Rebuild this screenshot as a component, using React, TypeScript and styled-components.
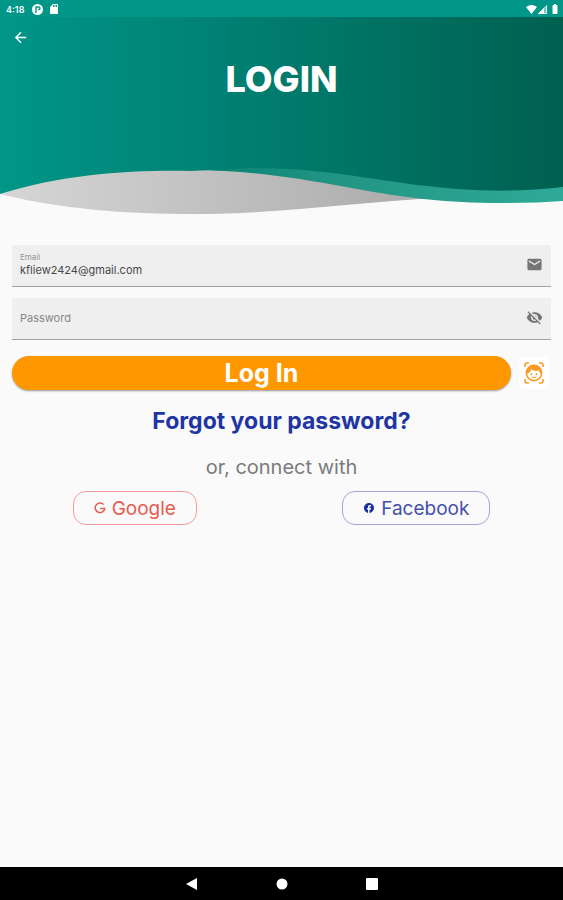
import React, { useState } from 'react';
import styled, { createGlobalStyle } from 'styled-components';
import { MdArrowBack, MdEmail, MdVisibilityOff, MdVisibility, MdFacebook, MdSdCard, MdBatteryFull } from 'react-icons/md';

const GlobalStyle = createGlobalStyle`
  * { box-sizing: border-box; }
  body { margin: 0; background: #fafafa; font-family: Inter, "Noto Sans", sans-serif; }
  button, input { font-family: inherit; }
`;

const Page = styled.div`
  display: flex;
  flex-direction: column;
  min-height: 100vh;
`;

const StatusBar = styled.div`
  display: flex;
  align-items: center;
  justify-content: space-between;
  height: 17px;
  padding: 1px 2px 0 6px;
  background: #009688;
  color: #fff;
`;

const StatusGroup = styled.div<{ $gap: number }>`
  display: flex;
  align-items: center;
  gap: ${p => p.$gap}px;
`;

const Clock = styled.span`
  font-size: 9px;
  font-weight: 600;
  margin-right: 3px;
`;

const Header = styled.header`
  display: grid;
  height: 199px;
  & > * { grid-area: 1 / 1; }
`;

const Waves = styled.svg`
  display: block;
  width: 100%;
  height: 199px;
`;

const HeaderContent = styled.div`
  display: grid;
  grid-template-rows: 40px auto;
  align-content: start;
  justify-items: start;
`;

const BackButton = styled.button`
  display: grid;
  place-items: center;
  width: 40px;
  height: 40px;
  padding: 0;
  border: 0;
  background: none;
  color: #fff;
  cursor: pointer;
`;

const Title = styled.h1`
  justify-self: center;
  margin: 0;
  color: #fff;
  font-size: 36px;
  line-height: 44px;
  font-weight: 800;
`;

const Form = styled.form`
  display: flex;
  flex-direction: column;
  gap: 11px;
  padding: 29px 12px 0;
`;

const Field = styled.div`
  display: flex;
  align-items: center;
  height: 42px;
  padding: 0 8px 2px;
  background: #efefef;
  border-bottom: 1px solid #a2a2a2;
  color: #757575;
`;

const FieldText = styled.div`
  flex: 1;
  display: flex;
  flex-direction: column;
  min-width: 0;
`;

const FieldLabel = styled.label`
  font-size: 8px;
  line-height: 10px;
  color: #949494;
`;

const FieldInput = styled.input`
  width: 100%;
  padding: 0;
  border: 0;
  outline: 0;
  background: none;
  font-size: 11px;
  line-height: 16px;
  color: #484848;
  &::placeholder { color: #868686; opacity: 1; }
`;

const IconButton = styled.button`
  display: grid;
  place-items: center;
  padding: 0;
  border: 0;
  background: none;
  color: inherit;
  cursor: pointer;
`;

const Actions = styled.div`
  display: flex;
  align-items: center;
  gap: 8px;
  padding: 5px 2px 0 0;
`;

const LoginButton = styled.button`
  flex: 1;
  height: 34px;
  padding: 0;
  border: 0;
  border-radius: 17px;
  background: #ff9800;
  box-shadow: 0 1px 2px rgba(0, 0, 0, 0.4);
  color: #fff;
  font-size: 25px;
  line-height: 34px;
  font-weight: 700;
  cursor: pointer;
`;

const FaceButton = styled.button`
  display: grid;
  place-items: center;
  width: 30px;
  height: 32px;
  padding: 0;
  border: 0;
  border-radius: 5px;
  background: #fff;
  color: #f99a25;
  cursor: pointer;
`;

const Links = styled.section`
  display: flex;
  flex-direction: column;
  align-items: center;
  padding-top: 16px;
`;

const ForgotLink = styled.a`
  color: #1f35a5;
  font-size: 23px;
  line-height: 30px;
  font-weight: 700;
  text-decoration: none;
`;

const Divider = styled.p`
  margin: 17px 0 10px;
  color: #7b7b7b;
  font-size: 20px;
  line-height: 28px;
`;

const Social = styled.div`
  display: flex;
  justify-content: space-around;
  align-self: stretch;
`;

const SocialButton = styled.button<{ $color: string; $border: string }>`
  display: flex;
  align-items: center;
  gap: 6px;
  height: 34px;
  padding: 0 20px;
  border: 1px solid ${p => p.$border};
  border-radius: 13px;
  background: transparent;
  color: ${p => p.$color};
  font-size: 19px;
  cursor: pointer;
`;

const NavBar = styled.nav`
  display: flex;
  align-items: center;
  justify-content: center;
  gap: 66px;
  height: 33px;
  margin-top: auto;
  background: #000;
  color: #fff;
`;

const NavButton = styled(IconButton)`
  width: 24px;
  height: 24px;
`;

function HeaderWaves() {
  return (
    <Waves viewBox="0 17 563 199" preserveAspectRatio="none" aria-hidden="true">
      <defs>
        <linearGradient id="teal" x1="0" x2="1">
          <stop offset="0" stopColor="#009688" />
          <stop offset="0.5" stopColor="#007b6d" />
          <stop offset="1" stopColor="#006050" />
        </linearGradient>
        <linearGradient id="mint" x1="0" x2="1">
          <stop offset="0" stopColor="#007f72" />
          <stop offset="0.35" stopColor="#219382" />
          <stop offset="1" stopColor="#2faa98" />
        </linearGradient>
        <linearGradient id="silver" x1="0" x2="1">
          <stop offset="0" stopColor="#d6d6d6" />
          <stop offset="1" stopColor="#a9a9a9" />
        </linearGradient>
      </defs>
      <path d="M0 194 C60 209 125 214 195 214 C280 214 355 202 440 198 L400 160 L100 160Z" fill="url(#silver)" />
      <path d="M190 170 C320 171 370 203 500 203 Q535 203 563 201 V160 H190Z" fill="url(#mint)" />
      <path d="M0 17 H563 V187 C480 197 410 184 355 176 C320 171 290 168 250 168 L190 171 C130 170 65 174 0 194Z" fill="url(#teal)" />
    </Waves>
  );
}

function FaceScanIcon() {
  return (
    <svg width="20" height="22" viewBox="0 0 20 22" fill="none" stroke="currentColor" strokeWidth="1.6" aria-hidden="true">
      <path d="M1 5V3Q1 1 3 1H5M15 1H17Q19 1 19 3V5M1 17V19Q1 21 3 21H5M15 21H17Q19 21 19 19V17" />
      <circle cx="10" cy="11" r="7.6" />
      <path d="M2.6 12C2 6 5 3 10 3C15 3 18 6 17.4 12C15.8 11 15 10 14.6 8.6C11.5 9.4 9 8.6 7.4 7.2C6.6 9.6 5 11 2.6 12Z" fill="currentColor" stroke="none" />
      <circle cx="7.4" cy="12.2" r="1" fill="currentColor" stroke="none" />
      <circle cx="12.6" cy="12.2" r="1" fill="currentColor" stroke="none" />
      <path d="M7.5 15Q10 16.6 12.5 15" strokeWidth="1" />
    </svg>
  );
}

function GoogleIcon() {
  return (
    <svg width="12" height="12" viewBox="0 0 12 12" fill="none" stroke="currentColor" strokeWidth="1.5" aria-hidden="true">
      <path d="M9.6 2.6A4.8 4.8 0 1 0 10.8 6.4H6.2" />
    </svg>
  );
}

export default function App() {
  const [email, setEmail] = useState('kfliew2424@gmail.com');
  const [password, setPassword] = useState('');
  const [shown, setShown] = useState(false);

  return (
    <>
      <GlobalStyle />
      <Page>
        <StatusBar>
          <StatusGroup $gap={5}>
            <Clock>4:18</Clock>
            <svg width="11" height="11" viewBox="0 0 11 11" aria-hidden="true">
              <circle cx="5.5" cy="5.5" r="5.5" fill="#fff" />
              <path d="M4 9V3H6.6Q8 3 8 4.3Q8 5.6 6.6 5.6H6" fill="none" stroke="#009688" strokeWidth="1.4" />
            </svg>
            <MdSdCard size={12} />
          </StatusGroup>
          <StatusGroup $gap={1}>
            <svg width="11" height="9" viewBox="0 0 11 9" aria-hidden="true">
              <path d="M0 2Q5.5 -2 11 2L5.5 9Z" fill="#fff" />
            </svg>
            <svg width="10" height="10" viewBox="0 0 10 10" aria-hidden="true">
              <path d="M0 10L9 1V10Z" fill="#fff" fillOpacity="0.45" />
              <path d="M0 10L6 4V10Z" fill="#fff" />
              <path d="M0.8 9.6L8.6 1.8V9.6Z" fill="none" stroke="#fff" strokeWidth="0.8" />
            </svg>
            <MdBatteryFull size={12} />
          </StatusGroup>
        </StatusBar>

        <Header>
          <HeaderWaves />
          <HeaderContent>
            <BackButton type="button" aria-label="Back"><MdArrowBack size={17} /></BackButton>
            <Title>LOGIN</Title>
          </HeaderContent>
        </Header>

        <main>
          <Form onSubmit={e => e.preventDefault()}>
            <Field>
              <FieldText>
                <FieldLabel htmlFor="email">Email</FieldLabel>
                <FieldInput id="email" type="email" value={email} onChange={e => setEmail(e.target.value)} />
              </FieldText>
              <MdEmail size={17} />
            </Field>
            <Field>
              <FieldText>
                <FieldInput
                  aria-label="Password"
                  placeholder="Password"
                  type={shown ? 'text' : 'password'}
                  value={password}
                  onChange={e => setPassword(e.target.value)}
                />
              </FieldText>
              <IconButton type="button" aria-label="Toggle password visibility" onClick={() => setShown(!shown)}>
                {shown ? <MdVisibility size={17} /> : <MdVisibilityOff size={17} />}
              </IconButton>
            </Field>
            <Actions>
              <LoginButton type="submit">Log In</LoginButton>
              <FaceButton type="button" aria-label="Log in with face"><FaceScanIcon /></FaceButton>
            </Actions>
          </Form>

          <Links>
            <ForgotLink href="#forgot">Forgot your password?</ForgotLink>
            <Divider>or, connect with</Divider>
            <Social>
              <SocialButton type="button" $color="#e85a50" $border="#f49a94">
                <GoogleIcon />Google
              </SocialButton>
              <SocialButton type="button" $color="#4450ae" $border="#a0a5d4">
                <MdFacebook size={12} color="#1a2fa8" />Facebook
              </SocialButton>
            </Social>
          </Links>
        </main>

        <NavBar>
          <NavButton type="button" aria-label="Navigate back">
            <svg width="12" height="14" viewBox="0 0 12 14"><path d="M0 7L11 1V13Z" fill="currentColor" /></svg>
          </NavButton>
          <NavButton type="button" aria-label="Home">
            <svg width="12" height="12" viewBox="0 0 12 12"><circle cx="6" cy="6" r="5.5" fill="currentColor" /></svg>
          </NavButton>
          <NavButton type="button" aria-label="Overview">
            <svg width="12" height="12" viewBox="0 0 12 12"><rect width="12" height="12" rx="1" fill="currentColor" /></svg>
          </NavButton>
        </NavBar>
      </Page>
    </>
  );
}
